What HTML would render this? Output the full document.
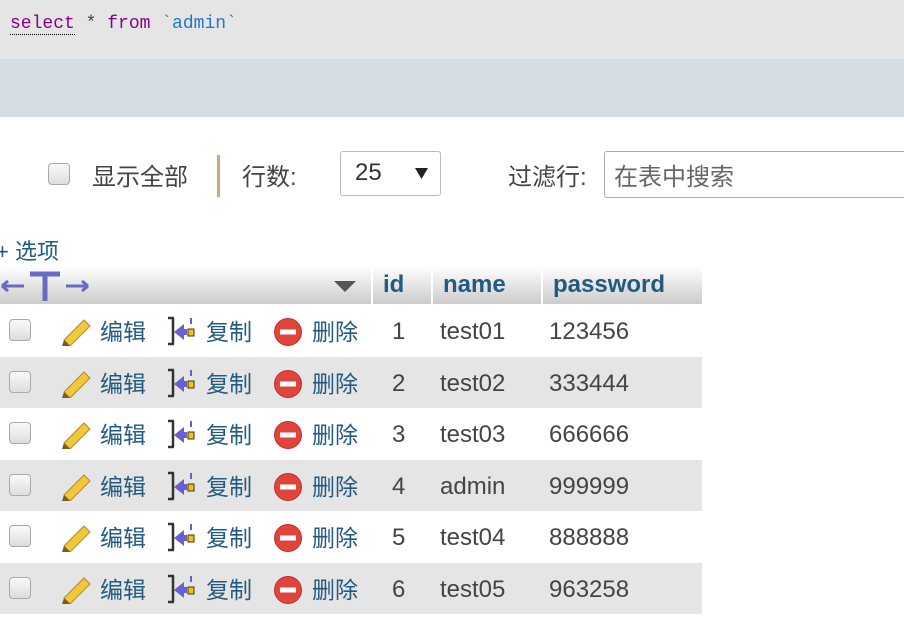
<!DOCTYPE html>
<html><head><meta charset="utf-8"><style>
*{margin:0;padding:0;box-sizing:border-box}
body{width:904px;height:632px;overflow:hidden;background:#fff;font-family:"Liberation Sans","Noto Sans CJK SC",sans-serif;color:#444;position:relative}
.top{position:absolute;left:0;top:0;width:904px;height:59px;background:#e5e5e5}
.sql{position:absolute;left:10px;top:14px;font-family:"Liberation Mono",monospace;font-size:18px}
.band{position:absolute;left:0;top:59px;width:904px;height:58px;background:#d5dce3}
.abs{position:absolute}
.cb{position:absolute;width:22px;height:22px;border:1px solid #aaa;border-radius:4px;background:linear-gradient(#fafafa,#ddd)}
.t{font-size:24px;white-space:nowrap}
table{position:absolute;left:0;top:266px;border-collapse:collapse;width:702px}
th{height:38px;background:linear-gradient(#fff,#ccc);color:#235a81;font-size:24px;text-align:left;padding-left:10px;border-left:2px solid #fff;font-weight:bold}
.act{color:#235a81;font-size:23px}
</style></head><body>
<div class="top"></div>
<div class="sql"><span style="color:#808;border-bottom:1px dotted #000">select</span> * <span style="color:#808">from</span> <span style="color:#27c">`admin`</span></div>
<div class="band"></div>
<div class="cb" style="left:48px;top:163px"></div>
<div class="abs t" style="left:92px;top:157px">显示全部</div>
<div class="abs" style="left:217px;top:155px;width:3px;height:42px;background:#c8a882"></div>
<div class="abs t" style="left:242px;top:157px">行数:</div>
<div class="abs" style="left:340px;top:151px;width:101px;height:45px;border:1px solid #bbb;border-radius:3px"></div>
<div class="abs t" style="left:355px;top:159px;color:#333">25</div>
<svg class="abs" style="left:415px;top:168px" width="13" height="12"><path d="M0 0H13L6.5 11Z" fill="#222"/></svg>
<div class="abs t" style="left:508px;top:157px">过滤行:</div>
<div class="abs" style="left:604px;top:151px;width:310px;height:47px;border:1px solid #aaa;border-radius:3px"></div>
<div class="abs t" style="left:614px;top:157px;color:#666">在表中搜索</div>
<div class="abs" style="left:-4px;top:234px;font-size:22px;color:#235a81">+ 选项</div>
<table>
<tr><th style="border-left:none;padding:0;width:372px;position:relative">
<svg style="position:absolute;left:0;top:4px" width="95" height="32"><path d="M2 16H24M2 16l6-5M2 16l6 5M66 16H88M88 16l-6-5M88 16l-6 5" stroke="#6a6ac0" stroke-width="3" fill="none"/><path d="M30 4H60M45 4V31" stroke="#6a6ac0" stroke-width="5" fill="none"/></svg>
<svg style="position:absolute;left:334px;top:15px" width="22" height="12"><path d="M0 0H22L11 11Z" fill="#555"/></svg></th><th style="width:60px">id</th><th style="width:110px">name</th><th>password</th></tr>
</table>
<div id="rows"></div>
<script>
var d=[["1","test01","123456"],["2","test02","333444"],["3","test03","666666"],["4","admin","999999"],["5","test04","888888"],["6","test05","963258"]];
var h='';
d.forEach(function(r,i){var y=305+i*51.5;
h+='<div class="abs" style="left:0;top:'+y+'px;width:702px;height:51px;background:'+(i%2?'#e5e5e5':'#fff')+'"></div>';
h+='<div class="cb" style="left:9px;top:'+(y+14)+'px"></div>';
h+='<svg class="abs" style="left:60px;top:'+(y+11)+'px" width="32" height="30"><path d="M4 24 L24 4 L30 10 L10 30 Z" fill="#f0c93a" stroke="#b8862a"/><path d="M4 24 L2 30 L10 30Z" fill="#7a5a20"/></svg>';
h+='<div class="abs act" style="left:100px;top:'+(y+8)+'px">编辑</div>';
h+='<svg class="abs" style="left:166px;top:'+(y+11)+'px" width="34" height="30"><path d="M2 2h6M2 28h6M7 2v26" stroke="#333" stroke-width="2.5" fill="none"/><path d="M8 16 L18 8 V24Z" fill="#6a5fd0"/><rect x="12" y="13" width="9" height="6" fill="#6a5fd0"/><rect x="22" y="13" width="6" height="7" fill="#f5c400" stroke="#333"/><path d="M25 2v6" stroke="#6a5fd0" stroke-width="2"/></svg>';
h+='<div class="abs act" style="left:206px;top:'+(y+8)+'px">复制</div>';
h+='<svg class="abs" style="left:273px;top:'+(y+12)+'px" width="30" height="30"><circle cx="15" cy="15" r="13.5" fill="#e0443a" stroke="#c03030"/><rect x="7" y="12.5" width="16" height="5" fill="#fff"/></svg>';
h+='<div class="abs act" style="left:312px;top:'+(y+8)+'px">删除</div>';
h+='<div class="abs t" style="left:392px;top:'+(y+13)+'px">'+r[0]+'</div>';
h+='<div class="abs t" style="left:440px;top:'+(y+13)+'px">'+r[1]+'</div>';
h+='<div class="abs t" style="left:549px;top:'+(y+13)+'px">'+r[2]+'</div>';
});
document.getElementById('rows').innerHTML=h;
</script>
</body></html>
